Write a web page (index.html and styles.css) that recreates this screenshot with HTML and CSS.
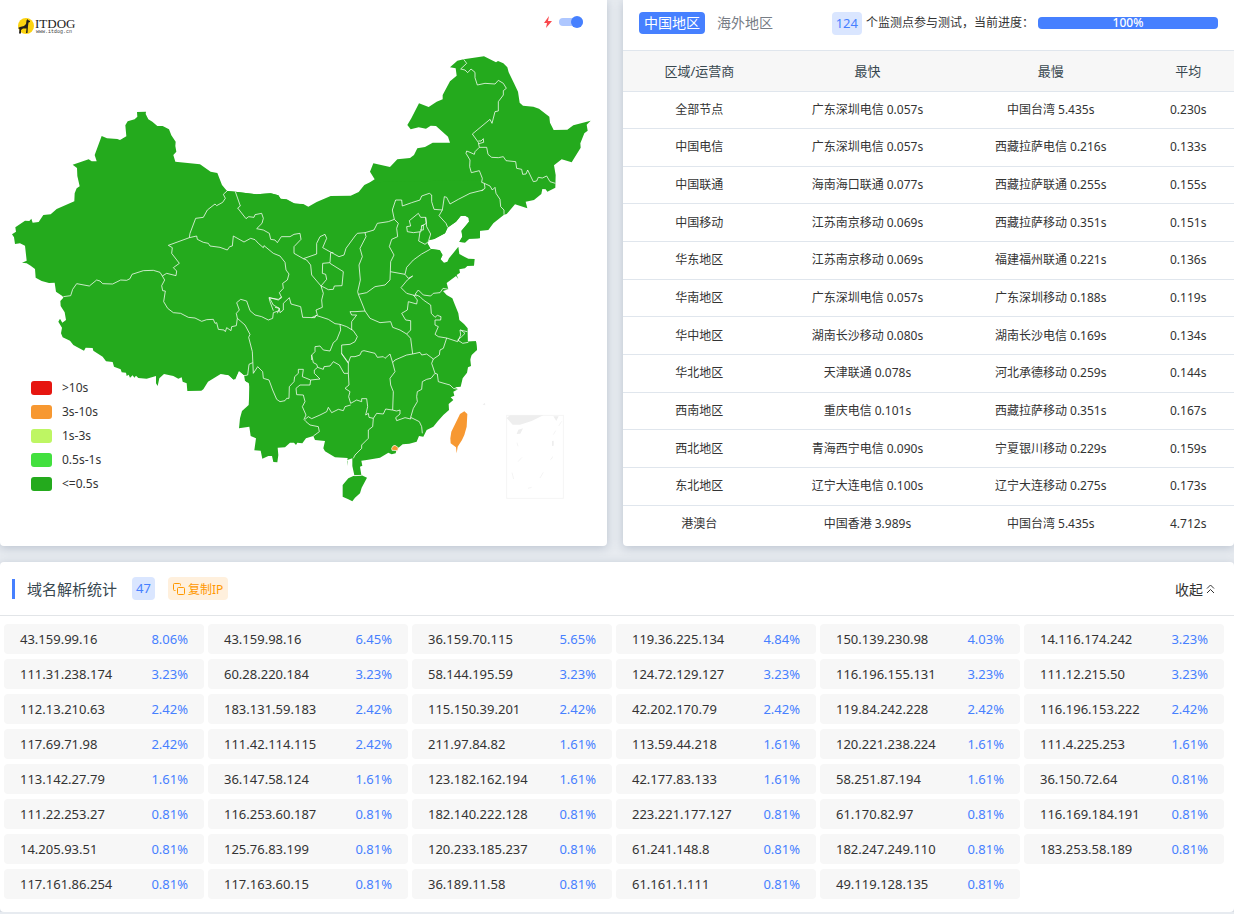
FILE: index.html
```html
<!DOCTYPE html>
<html lang="zh-CN">
<head>
    <meta charset="UTF-8">
    <meta name="viewport" content="width=device-width, initial-scale=1.0">
    <title>网站测速 - ITDOG</title>
    <link rel="stylesheet" href="styles.css">
</head>
<body>
    <div class="top">
        <section class="card map-card">
            <div class="map-bar">
                <svg class="logo" width="62" height="20" viewBox="0 0 62 20" role="img" aria-label="ITDOG">
                    <circle cx="9" cy="10" r="8" fill="#fcd310"/>
                    <path d="M1 12 L3 11 L7 10 L9 8 L9.500 4.500 L10.500 3 L11 4 L13 5 L13 6 L11.500 6.500 L11 10 L10.500 17 L9 17 L9.500 12.500 L6 12.500 L4 14 L4 17.500 L2 17.500 L2.500 13 Z" fill="#231f1a"/>
                    <text class="logo-name" x="18" y="12">ITDOG</text>
                    <text class="logo-site" x="19" y="17">www.itdog.cn</text>
                </svg>
                <label class="fast">
                    <svg width="8" height="12" viewBox="0 0 8 12" aria-hidden="true"><path d="M5 0 L0 7 L3 7 L2 12 L8 5 L4 5 Z" fill="#f9484d"/></svg>
                    <input type="checkbox" class="switch" aria-label="快速模式" checked>
                </label>
            </div>
            <!-- 中国地图 -->
            <svg class="map" viewBox="0 132 1821 1506" role="img" aria-label="中国地图">
                <g class="land">
                    <path transform="translate(0 300)" d="M36 403L48 395L46 382L75 362L88 363L94 356L98 368L116 366L130 345L152 343L170 327L223 304L224 280L230 265L239 259L232 228L231 204L218 194L266 178L275 184L290 184L284 165L305 108L321 115L352 117L360 120L379 109L376 76L383 64L404 58L412 50L411 36L438 35L437 42L445 58L457 65L472 78L488 78L507 88L514 106L527 125L526 138L529 155L520 165L526 185L600 193L632 215L652 219L666 255L681 273L706 275L770 283L812 280L835 286L842 297L860 299L880 310L900 312L900 900L748 900L748 850L738 845L735 828L717 812L706 838L698 836L688 826L662 822L624 845L610 868L604 872L562 873L560 850L548 845L545 832L535 836L520 828L492 822L478 835L473 858L468 850L468 828L440 836L415 834L408 827L403 833L398 826L390 833L386 824L380 828L378 818L365 817L362 808L342 800L338 786L318 784L308 770L280 752L278 744L257 743L252 752L235 743L220 735L210 722L188 712L183 700L186 683L175 665L180 656L187 668L198 660L194 637L182 618L181 603L190 593L187 588L168 575L164 548L147 549L125 543L107 533L105 507L92 497L80 490L66 488L80 482L75 437L60 430L45 432L42 412Z"/>
                    <path transform="translate(1110 120)" d="M0 427L14 418L0 395L10 370L60 381L82 358L120 354L132 345L142 325L165 321L188 308L240 308L234 290L198 258L182 257L168 266L146 262L122 268L112 255L124 235L147 190L176 201L200 185L218 178L218 165L240 124L260 107L257 85L240 82L262 62L281 58L342 49L378 67L384 63L400 70L412 82L416 97L432 130L444 155L449 188L459 197L490 200L507 206L538 230L540 248L551 270L592 269L610 256L662 242L650 254L653 272L643 280L631 310L632 323L605 367L575 358L552 376L557 405L556 443L532 455L539 466L527 448L517 447L514 462L492 480L467 485L472 505L435 493L410 522L402 524L370 550L355 570L327 573L326 595L296 596L280 607L268 606L277 590L275 573L297 545L296 533L287 527L272 528L258 545L233 563L225 580L192 597L178 600L172 610L182 627L208 630L218 645L210 660L0 660Z"/>
                    <path transform="translate(660 540)" d="M0 20L21 33L46 35L110 43L152 40L175 46L182 56L200 58L225 71L250 72L265 80L290 66L332 48L392 47L416 36L433 15L450 7L780 0L780 175L748 176L735 188L718 185L727 170L724 152L747 125L746 113L735 107L722 108L708 125L683 142L675 160L643 177L628 180L622 190L632 207L660 211L667 225L662 238L672 248L682 245L687 235L715 200L718 222L733 230L745 236L764 237L762 257L742 258L735 265L718 268L720 278L710 285L715 297L708 288L680 309L685 328L669 333L680 345L697 355L705 375L715 400L718 420L732 432L743 445L743 485L768 484L771 510L755 525L750 540L0 540Z"/>
                    <path transform="translate(660 990)" d="M0 0L740 0L743 35L768 34L771 60L757 63L750 80L753 108L744 112L741 128L728 145L722 170L705 172L714 178L700 185L703 197L692 202L700 210L686 222L687 240L670 255L652 275L640 290L620 300L610 320L597 318L590 335L568 341L548 343L530 358L527 370L515 373L505 368L480 383L440 390L424 392L427 407L420 410L424 435L403 436L397 408L397 385L382 390L383 408L381 395L383 384L345 382L315 364L310 355L315 333L285 330L280 318L258 325L247 340L232 338L228 345L222 338L210 338L195 352L173 353L175 375L172 397L160 396L156 378L145 378L127 386L122 362L103 361L108 325L92 318L88 290L57 295L60 265L66 243L86 225L89 170L85 155L75 153L72 135L56 122L42 150L25 135L0 130Z"/>
                    <path transform="translate(660 990)" d="M385 445L400 438L425 436L441 443L425 473L420 490L405 503L397 514L385 508L368 500L368 465Z"/>
                </g>
                <g class="borders">
                    <g transform="translate(0 300)">
                        <path d="M681 273L670 283L676 295L668 307L650 317L645 312L622 330L610 352L587 355L570 400L568 413L505 436L517 443L515 460L538 490L520 503L530 513L528 527L500 520L487 528"/>
                        <path d="M190 590L212 587L218 568L230 551L268 558L290 540L300 543L308 551L338 552L362 540L380 541L390 536L396 523L430 512L460 511L480 517L487 528L494 540L485 557L488 572L496 573L491 605L503 625L520 638L542 640L565 652L585 654L605 664L620 659L640 658L645 670L650 668L655 688L672 690L676 695L680 683L693 692L695 680L709 677L712 655L735 675L750 703L746 712L757 755L760 820"/>
                        <path d="M568 413L590 408L592 418L610 427L625 430L630 438L660 442L682 450L689 440L697 438L700 408L732 426L752 415L765 419L775 430L790 443L792 437L820 460L840 468L855 487L858 510L867 522L862 540L848 550L850 565L838 578L845 593L835 600L808 593L820 615L838 625L832 640"/>
                        <path d="M712 655L709 640L718 630L710 608L722 598L740 603L750 632L765 645L785 650L805 660L818 655L820 638L838 632"/>
                    </g>
                    <g transform="translate(660 540)">
                        <path d="M46 35L61 78L53 84L78 116L86 110L102 112L105 104L125 100L130 115L126 130L110 146L130 150L148 160L152 178L165 180L172 188L184 170L210 170L222 163L240 160L243 178L222 200L222 220L250 236L290 222L290 190L300 170L315 163L320 175L308 203L335 218L357 230L372 225L378 205L405 168L412 160L435 158L462 150L472 130L505 125L523 118"/>
                        <path d="M160 392L150 365L147 353L175 358L185 350M165 382L178 385L180 398L190 390L190 370L208 353L213 372L242 380L248 412L285 413L288 406L325 418L345 431L360 433L380 440L400 452"/>
                        <path d="M250 236L260 240L272 255L275 285L303 318L320 298L317 283L307 280L308 250L330 248L332 218L340 218M330 250L370 275L366 317L343 318L340 328L325 329L312 322L303 318L310 340L305 360L307 382L288 390L292 405L275 413"/>
                        <path d="M435 158L438 170L420 205L427 230L417 255L421 300L413 335L415 343L428 375L435 393L405 395L390 395L395 405L410 405L395 425L395 450"/>
                        <path d="M523 118L535 130L530 145L533 170L515 178L508 200L522 225L512 245L511 275L510 300L495 315L465 320L440 338L415 343"/>
                        <path d="M511 275L555 283L560 262L580 240L605 222L632 207M555 283L565 295L578 288L562 300L543 323L560 340L590 348"/>
                        <path d="M523 118L517 90L527 60L545 60L547 78L575 68L600 60L605 48L628 40L635 45L635 65L642 88L667 90L673 50L680 52L690 72L715 58L750 40L790 30M667 90L657 107L678 130L683 142"/>
                        <path d="M560 140L572 138L568 122L595 100L602 112L617 112L619 130L605 138L603 155L580 158L562 155ZM600 155L596 183L615 193L625 185M617 112L620 140L632 162L625 185M603 138L610 135L610 150L600 150"/>
                        <path d="M585 343L595 330L610 345L632 348L640 340L660 338L669 325L685 328M580 345L592 360L590 372L565 365L562 390L545 400L557 420L572 422L572 450L560 462"/>
                        <path d="M435 393L450 415L480 428L512 425L518 442L540 450L560 462L572 475L578 522L600 517L605 525L620 522L640 537"/>
                        <path d="M585 343L600 350L610 360L632 375L634 400L645 412L652 406L663 410L662 420L645 420L645 435L655 440L645 463L655 470L680 474L713 485L722 465L720 450L742 455M722 450L735 460L725 470L713 480L728 490L745 487M680 474L670 505L660 510L658 525L640 537"/>
                        <path d="M360 433L362 450L350 480L340 488L330 513L310 510L300 498L285 500L285 515L275 525L275 540M400 452L412 470L405 485L390 493L365 495L365 522L385 550"/>
                    </g>
                    <g transform="translate(660 990)">
                        <path d="M72 137L83 135L87 103L98 98M100 130L113 110L128 125L130 145L147 150L158 180L170 208L180 215L195 212L200 205L207 205L208 170L222 155L224 140L235 130L235 118L250 118L247 140L272 150L300 147L283 130L283 120L293 112L310 118L312 110L330 108L340 95L358 105L372 130L385 130L385 98L365 70"/>
                        <path d="M275 75L280 98L290 103L293 112M272 150L270 165L240 165L228 175L230 194L250 195L255 215L247 230L258 255L252 268L258 275L270 285L295 290L298 305L280 318"/>
                        <path d="M385 130L387 165L375 175L390 185L386 200L392 220L410 210L425 215L425 206L440 206L443 230L437 255L445 250L447 262L460 265"/>
                        <path d="M255 268L265 260L275 266L300 255L320 245L325 232L335 248L355 238L370 242L375 230L392 225"/>
                        <path d="M385 98L392 80L405 80L420 75L425 64L432 62L465 70L472 82L490 80L495 85L510 72L518 98L525 90L560 75L578 72M518 98L525 125L510 145L512 165L520 185L518 240"/>
                        <path d="M460 265L458 290L445 300L445 325L425 345L425 355L405 375L400 385M460 265L470 250L490 252L497 237L517 240L530 243L540 240L540 252L527 263L530 272L555 263L572 267L572 262L580 235L592 215L590 200L592 185L605 178L607 155L620 148L633 145L645 130L635 100L640 87"/>
                        <path d="M572 262L598 275L605 290L607 310M645 130L652 132L655 155L672 160L690 165L700 175L714 178M403 437L425 436"/>
                    </g>
                    <g transform="translate(1110 120)">
                        <path d="M281 58L290 70L272 87L285 90L293 98L303 87L315 97L315 113L322 135L345 130L375 132L385 121L400 130L409 145L400 152L400 165L385 185L385 213L375 215L366 250L360 238L307 282L325 307L328 322L350 322L354 343L365 352L385 353L400 350L408 362L437 365L440 385L455 388L458 403L468 402L473 390L490 425L500 423L505 412L517 414L530 408L540 425L556 430"/>
                        <path d="M325 303L333 303L340 296L341 307L326 311M328 322L315 335L313 343L300 337L290 333L288 340L300 360L299 380L304 398L328 392L337 415L335 427L343 430L345 445L335 452M343 430L360 438L367 450L375 442L378 460L390 478L392 500L402 510L402 524"/>
                    </g>
                </g>
                <g class="slow" transform="translate(660 990)">
                    <path d="M720 252L733 244L742 252L740 290L733 315L726 330L713 350L710 370L708 352L692 340L691 325L694 305Z"/>
                    <path class="hk" d="M515 355L519 348L525 346L535 353L533 362L516 361Z"/>
                </g>
                <g class="islands" transform="translate(1440 1170)">
                    <rect x="80" y="76" width="170" height="249"/>
                    <path d="M80 84L90 76L190 76L155 93L120 104L98 104ZM220 79L236 79L229 93ZM110 132L115 119L129 115L121 131ZM216 153L221 152L221 167L216 168ZM209 212L219 197L217 205ZM8 44L14 38L16 46Z"/>
                    <path class="dash" d="M245 94L236 108M227 122L220 134M111 158L114 169M126 202L114 215M96 248L101 267M190 247L180 264M144 295L155 292"/>
                </g>
            </svg>
            <ul class="legend">
                <li><i class="red"></i>&gt;10s</li>
                <li><i class="orange"></i>3s-10s</li>
                <li><i class="lime"></i>1s-3s</li>
                <li><i class="light"></i>0.5s-1s</li>
                <li><i class="green"></i>&lt;=0.5s</li>
            </ul>
        </section>

        <section class="card stat-card">
            <div class="stat-bar">
                <button type="button" class="tab active">中国地区</button>
                <button type="button" class="tab">海外地区</button>
                <div class="progress-info">
                    <span class="badge">124</span>
                    <span>个监测点参与测试，当前进度：</span>
                </div>
                <div class="progress" role="progressbar" aria-label="当前进度" aria-valuenow="100"><div class="progress-in" style="width: 100%">100%</div></div>
            </div>
            <table class="stat">
                <thead>
                    <tr><th>区域/运营商</th><th>最快</th><th>最慢</th><th>平均</th></tr>
                </thead>
                <tbody>
                    <tr><td>全部节点</td><td>广东深圳电信 0.057s</td><td>中国台湾 5.435s</td><td>0.230s</td></tr>
                    <tr><td>中国电信</td><td>广东深圳电信 0.057s</td><td>西藏拉萨电信 0.216s</td><td>0.133s</td></tr>
                    <tr><td>中国联通</td><td>海南海口联通 0.077s</td><td>西藏拉萨联通 0.255s</td><td>0.155s</td></tr>
                    <tr><td>中国移动</td><td>江苏南京移动 0.069s</td><td>西藏拉萨移动 0.351s</td><td>0.151s</td></tr>
                    <tr><td>华东地区</td><td>江苏南京移动 0.069s</td><td>福建福州联通 0.221s</td><td>0.136s</td></tr>
                    <tr><td>华南地区</td><td>广东深圳电信 0.057s</td><td>广东深圳移动 0.188s</td><td>0.119s</td></tr>
                    <tr><td>华中地区</td><td>湖南长沙移动 0.080s</td><td>湖南长沙电信 0.169s</td><td>0.134s</td></tr>
                    <tr><td>华北地区</td><td>天津联通 0.078s</td><td>河北承德移动 0.259s</td><td>0.144s</td></tr>
                    <tr><td>西南地区</td><td>重庆电信 0.101s</td><td>西藏拉萨移动 0.351s</td><td>0.167s</td></tr>
                    <tr><td>西北地区</td><td>青海西宁电信 0.090s</td><td>宁夏银川移动 0.229s</td><td>0.159s</td></tr>
                    <tr><td>东北地区</td><td>辽宁大连电信 0.100s</td><td>辽宁大连移动 0.275s</td><td>0.173s</td></tr>
                    <tr><td>港澳台</td><td>中国香港 3.989s</td><td>中国台湾 5.435s</td><td>4.712s</td></tr>
                </tbody>
            </table>
        </section>
    </div>

    <section class="card ip-card">
        <div class="ip-bar">
            <h2>域名解析统计</h2>
            <span class="badge">47</span>
            <button type="button" class="copy">
                <svg width="12" height="12" viewBox="0 0 12 12" fill="none" stroke="currentColor" aria-hidden="true"><rect x="4.500" y="4.500" width="7" height="7" rx="1"/><path d="M2.500 7.500H1.500a1 1 0 0 1-1-1v-5a1 1 0 0 1 1-1h5a1 1 0 0 1 1 1v1"/></svg>
                复制IP
            </button>
            <button type="button" class="fold">
                收起
                <svg width="9" height="10" viewBox="0 0 9 10" fill="none" stroke="currentColor" aria-hidden="true"><path d="M1 4.500L4.500 1L8 4.500M1 9L4.500 5.500L8 9"/></svg>
            </button>
        </div>
        <ul class="ips">
            <li>43.159.99.16<span>8.06%</span></li>
            <li>43.159.98.16<span>6.45%</span></li>
            <li>36.159.70.115<span>5.65%</span></li>
            <li>119.36.225.134<span>4.84%</span></li>
            <li>150.139.230.98<span>4.03%</span></li>
            <li>14.116.174.242<span>3.23%</span></li>
            <li>111.31.238.174<span>3.23%</span></li>
            <li>60.28.220.184<span>3.23%</span></li>
            <li>58.144.195.59<span>3.23%</span></li>
            <li>124.72.129.127<span>3.23%</span></li>
            <li>116.196.155.131<span>3.23%</span></li>
            <li>111.12.215.50<span>3.23%</span></li>
            <li>112.13.210.63<span>2.42%</span></li>
            <li>183.131.59.183<span>2.42%</span></li>
            <li>115.150.39.201<span>2.42%</span></li>
            <li>42.202.170.79<span>2.42%</span></li>
            <li>119.84.242.228<span>2.42%</span></li>
            <li>116.196.153.222<span>2.42%</span></li>
            <li>117.69.71.98<span>2.42%</span></li>
            <li>111.42.114.115<span>2.42%</span></li>
            <li>211.97.84.82<span>1.61%</span></li>
            <li>113.59.44.218<span>1.61%</span></li>
            <li>120.221.238.224<span>1.61%</span></li>
            <li>111.4.225.253<span>1.61%</span></li>
            <li>113.142.27.79<span>1.61%</span></li>
            <li>36.147.58.124<span>1.61%</span></li>
            <li>123.182.162.194<span>1.61%</span></li>
            <li>42.177.83.133<span>1.61%</span></li>
            <li>58.251.87.194<span>1.61%</span></li>
            <li>36.150.72.64<span>0.81%</span></li>
            <li>111.22.253.27<span>0.81%</span></li>
            <li>116.253.60.187<span>0.81%</span></li>
            <li>182.140.222.128<span>0.81%</span></li>
            <li>223.221.177.127<span>0.81%</span></li>
            <li>61.170.82.97<span>0.81%</span></li>
            <li>116.169.184.191<span>0.81%</span></li>
            <li>14.205.93.51<span>0.81%</span></li>
            <li>125.76.83.199<span>0.81%</span></li>
            <li>120.233.185.237<span>0.81%</span></li>
            <li>61.241.148.8<span>0.81%</span></li>
            <li>182.247.249.110<span>0.81%</span></li>
            <li>183.253.58.189<span>0.81%</span></li>
            <li>117.161.86.254<span>0.81%</span></li>
            <li>117.163.60.15<span>0.81%</span></li>
            <li>36.189.11.58<span>0.81%</span></li>
            <li>61.161.1.111<span>0.81%</span></li>
            <li>49.119.128.135<span>0.81%</span></li>
        </ul>
    </section>
</body>
</html>
```
FILE: styles.css
```css
* {
    box-sizing: border-box;
}
body {
    margin: 0;
    background-color: #e7ebf0;
    color: #333;
    font-family: "Noto Sans", "Noto Sans CJK SC", sans-serif;
    font-size: 12px;
    line-height: 18px;
}
ul {
    list-style: none;
    margin: 0;
    padding: 0;
}
button {
    border: none;
    background: none;
    padding: 0;
    color: inherit;
    font-family: inherit;
    cursor: pointer;
}
.card {
    background-color: #fff;
    border-radius: 4px;
    box-shadow: 0 2px 10px rgba(60, 80, 110, 0.25);
}
.top {
    display: grid;
    grid-template-columns: 607fr 611fr;
    gap: 16px;
    margin-bottom: 16px;
}
.top .card {
    border-radius: 0 0 4px 4px;
}

/* 地图 */
.map-card {
    position: relative;
}
.map-bar {
    display: flex;
    justify-content: space-between;
    align-items: flex-start;
    height: 44px;
    padding: 16px 24px 0 17px;
}
.logo-name {
    font-family: "Liberation Serif", serif;
    font-size: 13px;
    fill: #222;
}
.logo-site {
    font-family: "Liberation Mono", monospace;
    font-size: 5px;
    fill: #444;
}
.fast {
    display: flex;
    align-items: center;
    gap: 7px;
}
.fast svg {
    margin-left: 1px;
}
.switch {
    appearance: none;
    display: flex;
    align-items: center;
    justify-content: flex-end;
    width: 24px;
    height: 8px;
    margin: 0;
    border-radius: 4px;
    background-color: #aec7ff;
    cursor: pointer;
}
.switch::before {
    content: "";
    width: 12px;
    height: 12px;
    border-radius: 50%;
    background-color: #4680ff;
}
.map {
    display: block;
    width: 100%;
}
.land {
    fill: #24aa1d;
}
.borders {
    fill: none;
    stroke: #fff;
    stroke-opacity: 0.75;
    stroke-width: 3;
    stroke-linejoin: round;
}
.slow {
    fill: #f79831;
}
.hk {
    stroke: #fff;
    stroke-width: 2;
}
.islands {
    fill: #eee;
}
.islands rect {
    fill: none;
    stroke: #f5f5f5;
    stroke-width: 3;
}
.islands .dash {
    stroke: #eee;
    stroke-width: 2;
}
.legend {
    position: absolute;
    left: 31px;
    bottom: 50px;
}
.legend li {
    display: flex;
    align-items: center;
    gap: 10px;
    height: 24px;
}
.legend i {
    width: 21px;
    height: 14px;
    border-radius: 3px;
}
.red { background-color: #e61610; }
.orange { background-color: #f79831; }
.lime { background-color: #bef663; }
.light { background-color: #42e03e; }
.green { background-color: #24aa1d; }

/* 区域统计 */
.stat-card {
    display: flex;
    flex-direction: column;
    padding-bottom: 4px;
}
.stat-bar {
    display: flex;
    align-items: center;
    height: 51px;
    padding: 0 16px 4px;
    border-bottom: 1px solid #e0e6ed;
}
.tab {
    height: 22px;
    padding: 0 5px;
    margin-right: 7px;
    border-radius: 4px;
    font-size: 14px;
    line-height: 22px;
    color: #777d85;
}
.tab.active {
    background-color: #4680ff;
    color: #fff;
}
.badge {
    padding: 0 4px;
    border-radius: 4px;
    background-color: #dae6ff;
    color: #4680ff;
    font-size: 13px;
    line-height: 23px;
}
.progress-info {
    display: flex;
    align-items: center;
    gap: 4px;
    margin-left: auto;
    white-space: nowrap;
}
.progress {
    width: 180px;
    height: 12px;
    margin-left: 4px;
    border-radius: 4px;
    background-color: #e9ecef;
}
.progress-in {
    border-radius: 4px;
    background-color: #4680ff;
    color: #fff;
    font-weight: 500;
    line-height: 12px;
    text-align: center;
}
.stat {
    flex: 1;
    width: 100%;
    table-layout: fixed;
    border-collapse: collapse;
    text-align: center;
}
.stat th, .stat td {
    padding: 0;
    border-bottom: 1px solid #e0e6ed;
    font-weight: normal;
}
.stat th {
    width: 30%;
    height: 40px;
    background-color: #f7f7f7;
    color: #37474f;
    font-size: 13px;
}
.stat th:first-child {
    width: 25%;
}
.stat th:last-child {
    width: 15%;
}
.stat tr:last-child td {
    border-bottom: none;
}

/* 域名解析 */
.ip-bar {
    display: flex;
    align-items: center;
    height: 54px;
    padding: 0 19px 0 12px;
    border-bottom: 1px solid #e2e5e8;
}
.ip-bar h2 {
    margin: 0 15px 0 0;
    padding-left: 12px;
    border-left: 3px solid #4680ff;
    color: #37474f;
    font-size: 15px;
    font-weight: normal;
    line-height: 20px;
}
.copy {
    display: flex;
    align-items: center;
    gap: 3px;
    height: 23px;
    margin-left: 13px;
    padding: 0 5px;
    border-radius: 4px;
    background-color: #fff0dd;
    color: #ff9800;
    font-size: 12px;
}
.fold {
    display: flex;
    align-items: center;
    gap: 3px;
    margin-left: auto;
    font-size: 14px;
}
.ips {
    display: grid;
    grid-template-columns: repeat(6, 1fr);
    gap: 5px 4px;
    padding: 8px 10px 13px 4px;
}
.ips li {
    display: flex;
    justify-content: space-between;
    padding: 0 16px;
    border-radius: 4px;
    background-color: #f7f7f7;
    font-size: 13px;
    line-height: 30px;
}
.ips span {
    color: #4680ff;
}
```
